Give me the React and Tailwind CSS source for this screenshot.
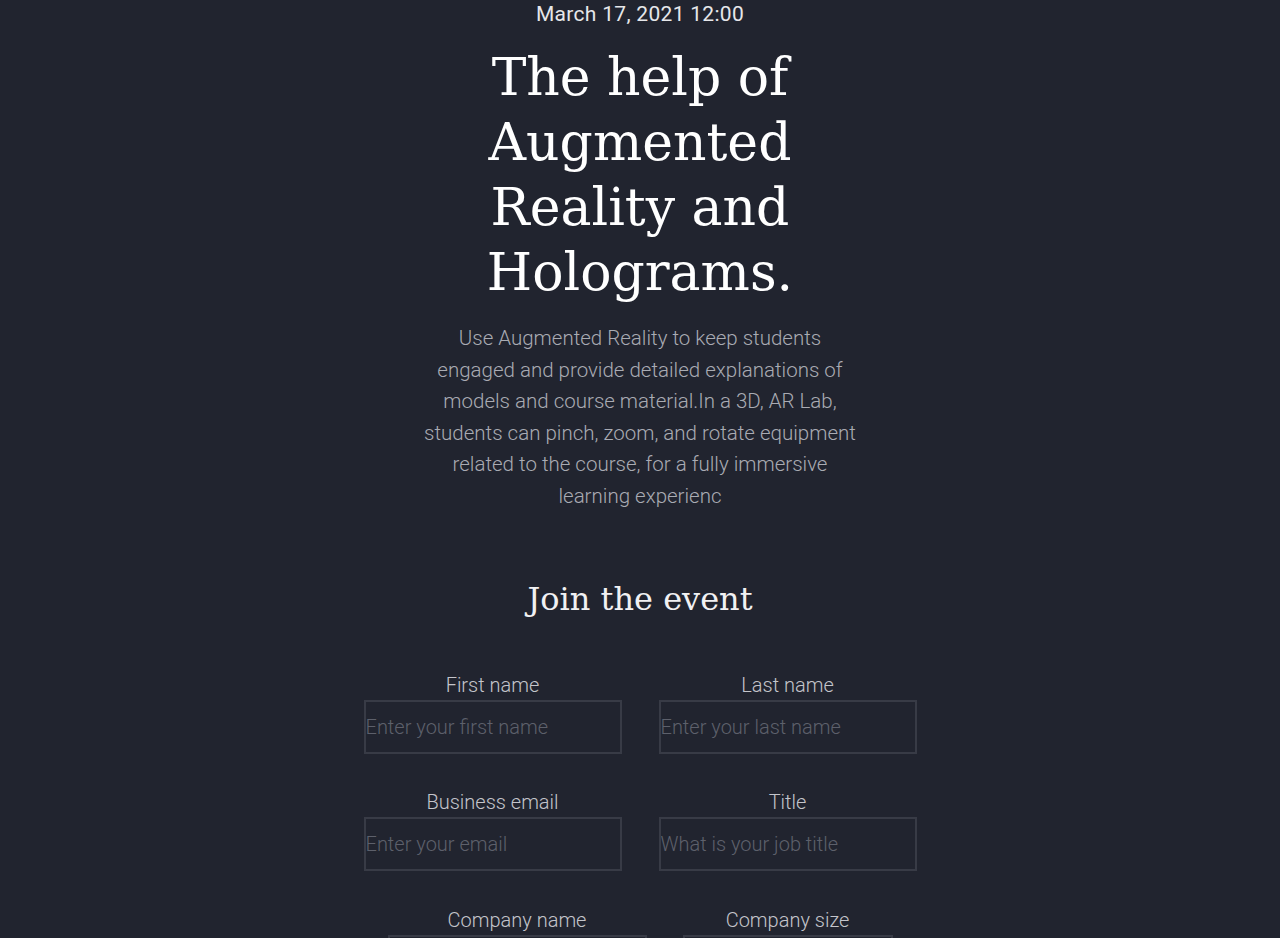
import React from 'react';

const sans = "font-['Roboto','Liberation_Sans',sans-serif]";
const serif = "font-['DejaVu_Serif','Liberation_Serif',serif]";

function Field({ label, placeholder, width }) {
  return (
    <div className="flex flex-col items-center">
      <label className={`${sans} font-light text-[20px] leading-[28px] text-[#c4c5cb]`}>{label}</label>
      <input
        type="text"
        placeholder={placeholder}
        className={`${sans} ${width} mt-[1px] h-[54px] border-2 border-[#383b46] bg-transparent px-0 font-light text-[20px] text-[#c4c5cb] placeholder:text-[#5d606b] outline-none`}
      />
    </div>
  );
}

export default function App() {
  return (
    <div className="min-h-screen bg-[#21242f] flex flex-col items-center">
      <div className={`${sans} text-[21px] leading-[28px] tracking-[0.3px] text-[#e6e7ea]`}>March 17, 2021 12:00</div>

      <h1 className={`${serif} mt-[17px] w-[330px] text-center text-[52px] leading-[65px] text-white`}>
        The help of Augmented Reality and Holograms.
      </h1>

      <p className={`${sans} mt-[18px] w-[460px] text-center font-light text-[20.5px] leading-[31.5px] text-[#a9abb3]`}>
        Use Augmented Reality to keep students<br />
        engaged and provide detailed explanations of<br />
        models and course material.In a 3D, AR Lab,<br />
        students can pinch, zoom, and rotate equipment<br />
        related to the course, for a fully immersive<br />
        learning experienc
      </p>

      <h2 className={`${serif} mt-[65px] text-[32px] leading-[44px] text-[#f1f1f3]`}>Join the event</h2>

      <div className="mt-[50px] flex gap-[37px]">
        <Field label="First name" placeholder="Enter your first name" width="w-[258px]" />
        <Field label="Last name" placeholder="Enter your last name" width="w-[258px]" />
      </div>

      <div className="mt-[34px] flex gap-[37px]">
        <Field label="Business email" placeholder="Enter your email" width="w-[258px]" />
        <Field label="Title" placeholder="What is your job title" width="w-[258px]" />
      </div>

      <div className="mt-[35px] flex gap-[36px]">
        <Field label="Company name" placeholder="" width="w-[259px]" />
        <Field label="Company size" placeholder="" width="w-[210px]" />
      </div>
      <div className="h-[80px]" />
    </div>
  );
}
